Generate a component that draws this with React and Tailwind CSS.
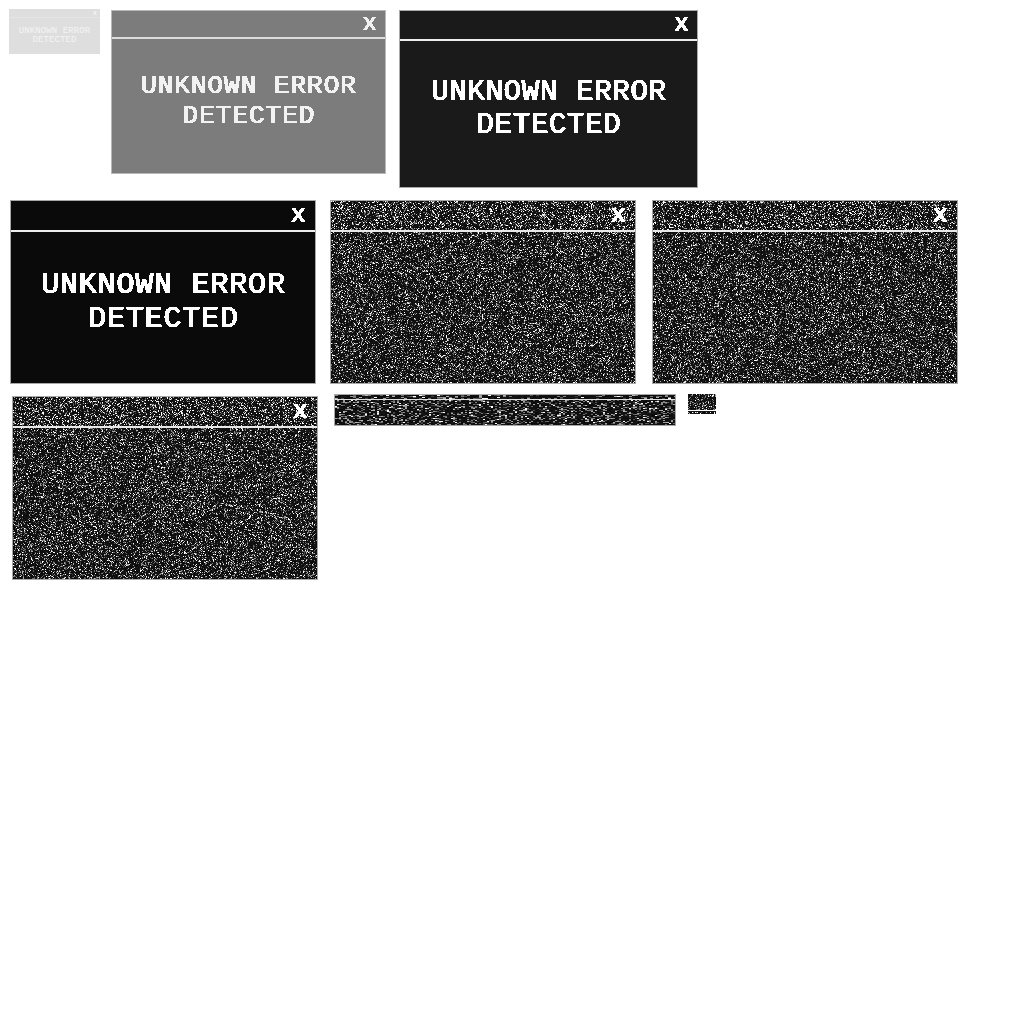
import React, { useRef, useEffect } from 'react';

// seeded noise so every run gives the same speckle
function Noise({ width, height, seed = 1, density = 0.3, white = 0.3, stretch = 1 }) {
  const ref = useRef(null);

  useEffect(() => {
    const ctx = ref.current.getContext('2d');
    const img = ctx.createImageData(width, height);
    let s = seed * 7919 + 13;
    const rand = () => {
      s = (s * 1664525 + 1013904223) >>> 0;
      return ((s >>> 8) & 0xffff) / 65536;
    };
    for (let y = 0; y < height; y++) {
      let v = 10;
      for (let x = 0; x < width; x++) {
        if (x % stretch === 0) {
          const r = rand();
          if (r < density * white) v = 255;
          else if (r < density) v = 60 + Math.floor(rand() * 130);
          else v = 8 + Math.floor(rand() * 18);
        }
        const i = (y * width + x) * 4;
        img.data[i] = v;
        img.data[i + 1] = v;
        img.data[i + 2] = v;
        img.data[i + 3] = 255;
      }
    }
    ctx.putImageData(img, 0, 0);
  }, [width, height, seed, density, white, stretch]);

  return <canvas ref={ref} width={width} height={height} className="block absolute inset-0" />;
}

const pixelFont = "font-['Liberation_Mono','DejaVu_Sans_Mono',monospace]";
const pixelText = '[text-shadow:1px_0_0_currentColor] [filter:url(#crisp)]';

function TextFrame({ className, headerClass, lineClass, bodyClass, closeClass, textClass, crisp = true }) {
  return (
    <div className={`flex flex-col shrink-0 border ${className}`}>
      <div className={`flex items-center justify-end shrink-0 ${headerClass}`}>
        <span className={`${pixelFont} font-bold ${closeClass} ${crisp ? '[filter:url(#crisp)]' : ''}`}>x</span>
      </div>
      <div className={`shrink-0 ${lineClass}`} />
      <div className={`flex-1 text-center ${bodyClass}`}>
        <p className={`${pixelFont} ${textClass} ${crisp ? pixelText : ''}`}>
          UNKNOWN ERROR
          <br />
          DETECTED
        </p>
      </div>
    </div>
  );
}

function NoiseFrame({ className, seed }) {
  return (
    <div className={`flex flex-col shrink-0 w-[306px] h-[184px] border border-[#a8a8a8] ${className}`}>
      <div className="relative h-[29px] shrink-0">
        <Noise width={304} height={29} seed={seed} density={0.3} white={0.35} />
        <span className={`${pixelFont} font-bold absolute right-[9px] top-0 text-[26px] leading-[29px] text-white [filter:url(#crisp)]`}>x</span>
      </div>
      <div className="h-[2px] shrink-0 bg-[#e8e8e8]" />
      <div className="relative flex-1 overflow-hidden">
        <Noise width={304} height={151} seed={seed + 50} density={0.27} white={0.22} />
      </div>
    </div>
  );
}

export default function App() {
  return (
    <div className="w-[1024px] h-[1024px] bg-white overflow-hidden">
      <svg width="0" height="0" className="absolute">
        <filter id="crisp" x="0" y="0" width="100%" height="100%">
          <feComponentTransfer>
            <feFuncA type="discrete" tableValues="0 1 1" />
          </feComponentTransfer>
        </filter>
      </svg>

      {/* row 1: fading in */}
      <div className="flex items-start h-[190px] pt-[9px] pl-[9px]">
        <TextFrame
          crisp={false}
          className="w-[91px] h-[45px] border-[#dedede] bg-[#dedede]"
          headerClass="h-[7px] pr-[2px]"
          lineClass="h-px bg-[#e6e6e6]"
          bodyClass="pt-[9px]"
          closeClass="text-[7px] leading-[7px] text-[#f4f4f4]"
          textClass="text-[9px] leading-[9px] tracking-[0.1px] text-[#f4f4f4]"
        />
        <TextFrame
          className="ml-[11px] mt-px w-[275px] h-[164px] border-[#b8b8b8] bg-[#7c7c7c]"
          headerClass="h-[26px] pr-[8px]"
          lineClass="h-[2px] bg-[#dcdcdc]"
          bodyClass="pt-[32px]"
          closeClass="text-[24px] leading-[26px] text-[#f0f0f0]"
          textClass="text-[26px] leading-[30px] tracking-[1px] text-[#f2f2f2]"
        />
        <TextFrame
          className="ml-[13px] mt-px w-[299px] h-[178px] border-[#a8a8a8] bg-[#1a1a1a]"
          headerClass="h-[28px] pr-[8px]"
          lineClass="h-[2px] bg-[#eeeeee]"
          bodyClass="pt-[35px]"
          closeClass="text-[25px] leading-[28px] text-white"
          textClass="text-[29px] leading-[33px] tracking-[0.7px] text-white"
        />
      </div>

      {/* row 2 */}
      <div className="flex items-start h-[196px] pt-[10px] pl-[10px]">
        <TextFrame
          className="w-[306px] h-[184px] border-[#a8a8a8] bg-[#0a0a0a]"
          headerClass="h-[29px] pr-[9px]"
          lineClass="h-[2px] bg-[#eeeeee]"
          bodyClass="pt-[36px]"
          closeClass="text-[26px] leading-[29px] text-white"
          textClass="text-[30px] leading-[34px] tracking-[0.8px] text-white"
        />
        <NoiseFrame className="ml-[14px]" seed={2} />
        <NoiseFrame className="ml-[16px]" seed={3} />
      </div>

      {/* row 3: collapsing */}
      <div className="flex items-start pt-[8px] pl-[12px]">
        <NoiseFrame className="mt-[2px]" seed={4} />
        <div className="ml-[16px] flex flex-col shrink-0 w-[342px] h-[32px] border border-[#a8a8a8]">
          <div className="relative h-[4px] shrink-0 overflow-hidden">
            <Noise width={340} height={4} seed={5} density={0.25} white={0.2} stretch={3} />
          </div>
          <div className="h-px shrink-0 bg-[#e0e0e0]" />
          <div className="relative flex-1 overflow-hidden">
            <Noise width={340} height={25} seed={6} density={0.3} white={0.08} stretch={2} />
          </div>
        </div>
        <div className="ml-[12px] flex flex-col shrink-0 w-[28px] h-[20px]">
          <div className="relative h-[16px] shrink-0 overflow-hidden">
            <Noise width={28} height={16} seed={7} density={0.28} white={0.15} />
          </div>
          <div className="h-px shrink-0 bg-white" />
          <div className="h-px shrink-0 bg-[#111111]" />
          <div className="relative flex-1 overflow-hidden">
            <Noise width={28} height={2} seed={8} density={0.3} />
          </div>
        </div>
      </div>
    </div>
  );
}
